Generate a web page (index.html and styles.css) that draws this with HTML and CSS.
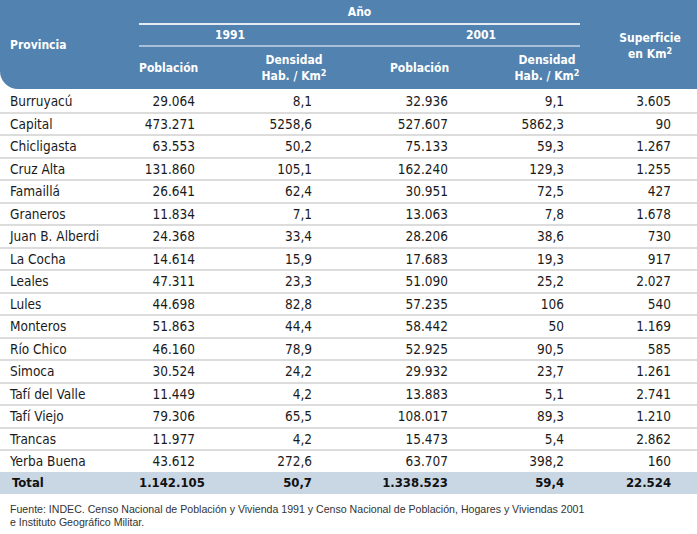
FILE: index.html
```html
<!DOCTYPE html>
<html lang="es">
<head>
<meta charset="utf-8">
<title>Población y densidad por departamento</title>
<link rel="stylesheet" href="styles.css">
</head>
<body>
<div class="page">
<table class="tabla">
  <colgroup>
    <col class="w1"><col class="w2"><col class="w3"><col class="w4"><col class="w5"><col class="w6">
  </colgroup>
  <thead>
    <tr class="h1">
      <th rowspan="3" class="prov">Provincia</th>
      <th colspan="4" class="anio">Año</th>
      <th rowspan="3" class="sup">Superficie<br>en Km<sup>2</sup></th>
    </tr>
    <tr class="h2">
      <th colspan="2" class="y91">1991</th>
      <th colspan="2" class="y01">2001</th>
    </tr>
    <tr class="h3">
      <th class="hc2">Población</th>
      <th class="hc3">Densidad<br>Hab. / Km<sup>2</sup></th>
      <th class="hc4">Población</th>
      <th class="hc5">Densidad<br>Hab. / Km<sup>2</sup></th>
    </tr>
  </thead>
  <tbody>
    <tr><td>Burruyacú</td><td>29.064</td><td>8,1</td><td>32.936</td><td>9,1</td><td>3.605</td></tr>
    <tr><td>Capital</td><td>473.271</td><td>5258,6</td><td>527.607</td><td>5862,3</td><td>90</td></tr>
    <tr><td>Chicligasta</td><td>63.553</td><td>50,2</td><td>75.133</td><td>59,3</td><td>1.267</td></tr>
    <tr><td>Cruz Alta</td><td>131.860</td><td>105,1</td><td>162.240</td><td>129,3</td><td>1.255</td></tr>
    <tr><td>Famaillá</td><td>26.641</td><td>62,4</td><td>30.951</td><td>72,5</td><td>427</td></tr>
    <tr><td>Graneros</td><td>11.834</td><td>7,1</td><td>13.063</td><td>7,8</td><td>1.678</td></tr>
    <tr><td>Juan B. Alberdi</td><td>24.368</td><td>33,4</td><td>28.206</td><td>38,6</td><td>730</td></tr>
    <tr><td>La Cocha</td><td>14.614</td><td>15,9</td><td>17.683</td><td>19,3</td><td>917</td></tr>
    <tr><td>Leales</td><td>47.311</td><td>23,3</td><td>51.090</td><td>25,2</td><td>2.027</td></tr>
    <tr><td>Lules</td><td>44.698</td><td>82,8</td><td>57.235</td><td>106</td><td>540</td></tr>
    <tr><td>Monteros</td><td>51.863</td><td>44,4</td><td>58.442</td><td>50</td><td>1.169</td></tr>
    <tr><td>Río Chico</td><td>46.160</td><td>78,9</td><td>52.925</td><td>90,5</td><td>585</td></tr>
    <tr><td>Simoca</td><td>30.524</td><td>24,2</td><td>29.932</td><td>23,7</td><td>1.261</td></tr>
    <tr><td>Tafí del Valle</td><td>11.449</td><td>4,2</td><td>13.883</td><td>5,1</td><td>2.741</td></tr>
    <tr><td>Tafí Viejo</td><td>79.306</td><td>65,5</td><td>108.017</td><td>89,3</td><td>1.210</td></tr>
    <tr><td>Trancas</td><td>11.977</td><td>4,2</td><td>15.473</td><td>5,4</td><td>2.862</td></tr>
    <tr><td>Yerba Buena</td><td>43.612</td><td>272,6</td><td>63.707</td><td>398,2</td><td>160</td></tr>
  </tbody>
  <tfoot>
    <tr><td>Total</td><td>1.142.105</td><td>50,7</td><td>1.338.523</td><td>59,4</td><td>22.524</td></tr>
  </tfoot>
</table>
<p class="fuente">Fuente: INDEC. Censo Nacional de Población y Vivienda 1991 y Censo Nacional de Población, Hogares y Viviendas 2001<br>e Instituto Geográfico Militar.</p>
</div>
</body>
</html>
```

FILE: styles.css
```css
html, body {
  margin: 0;
  padding: 0;
  background: #ffffff;
}

.page {
  width: 697px;
}

.tabla {
  width: 697px;
  table-layout: fixed;
  border-collapse: separate;
  border-spacing: 0;
  font-family: "DejaVu Sans Condensed", "DejaVu Sans", sans-serif;
  color: #1a1a1a;
}

.w1 { width: 139px; }
.w2 { width: 90px; }
.w3 { width: 106px; }
.w4 { width: 125px; }
.w5 { width: 120px; }
.w6 { width: 117px; }

.tabla th {
  background: #5282b0;
  color: #ffffff;
  font-weight: bold;
  font-size: 12px;
  line-height: 16px;
  padding: 0;
  white-space: nowrap;
  text-align: center;
}

.tabla sup {
  font-size: 9px;
  line-height: 0;
  vertical-align: 4px;
}

.prov {
  text-align: left !important;
  padding-left: 10px !important;
  border-bottom-left-radius: 18px;
}

.sup {
  padding-left: 23px !important;
  padding-top: 2px !important;
}

.h1 th.anio {
  height: 23px;
  border-bottom: 2px solid #e4ebf3;
}

.h2 th {
  height: 20px;
  border-bottom: 2px solid #a9bfd6;
}

.y91 { padding-right: 14px !important; }
.y01 { padding-left: 47px !important; }

.h3 th { height: 42px; }

.hc2 { padding-right: 33px !important; }
.hc3 { padding-left: 24px !important; }
.hc4 { padding-left: 44px !important; }
.hc5 { padding-left: 54px !important; }

.tabla td {
  font-size: 13.5px;
  line-height: 16px;
  height: 20.5px;
  padding: 0;
  text-align: right;
  white-space: nowrap;
  border-top: 2px solid #dcdcdc;
}

.tabla tbody tr:first-child td {
  border-top-color: #ffffff;
}

.tabla td:nth-child(1) { text-align: left; padding-left: 10px; }
.tabla td:nth-child(2) { padding-right: 34px; }
.tabla td:nth-child(3) { padding-right: 23px; }
.tabla td:nth-child(4) { padding-right: 12px; }
.tabla td:nth-child(5) { padding-right: 16px; }
.tabla td:nth-child(6) { padding-right: 26px; }

.tabla tfoot td {
  background: #c9d6e4;
  font-weight: bold;
  font-size: 13px;
  height: 22px;
  border-top: none;
  color: #111111;
}

.tabla tfoot td:nth-child(1) { padding-left: 12px; }

.fuente {
  margin: 9px 0 0 0;
  padding-left: 10px;
  font-family: "Liberation Sans", Arial, sans-serif;
  font-size: 10.6px;
  line-height: 13px;
  color: #333333;
}
```
